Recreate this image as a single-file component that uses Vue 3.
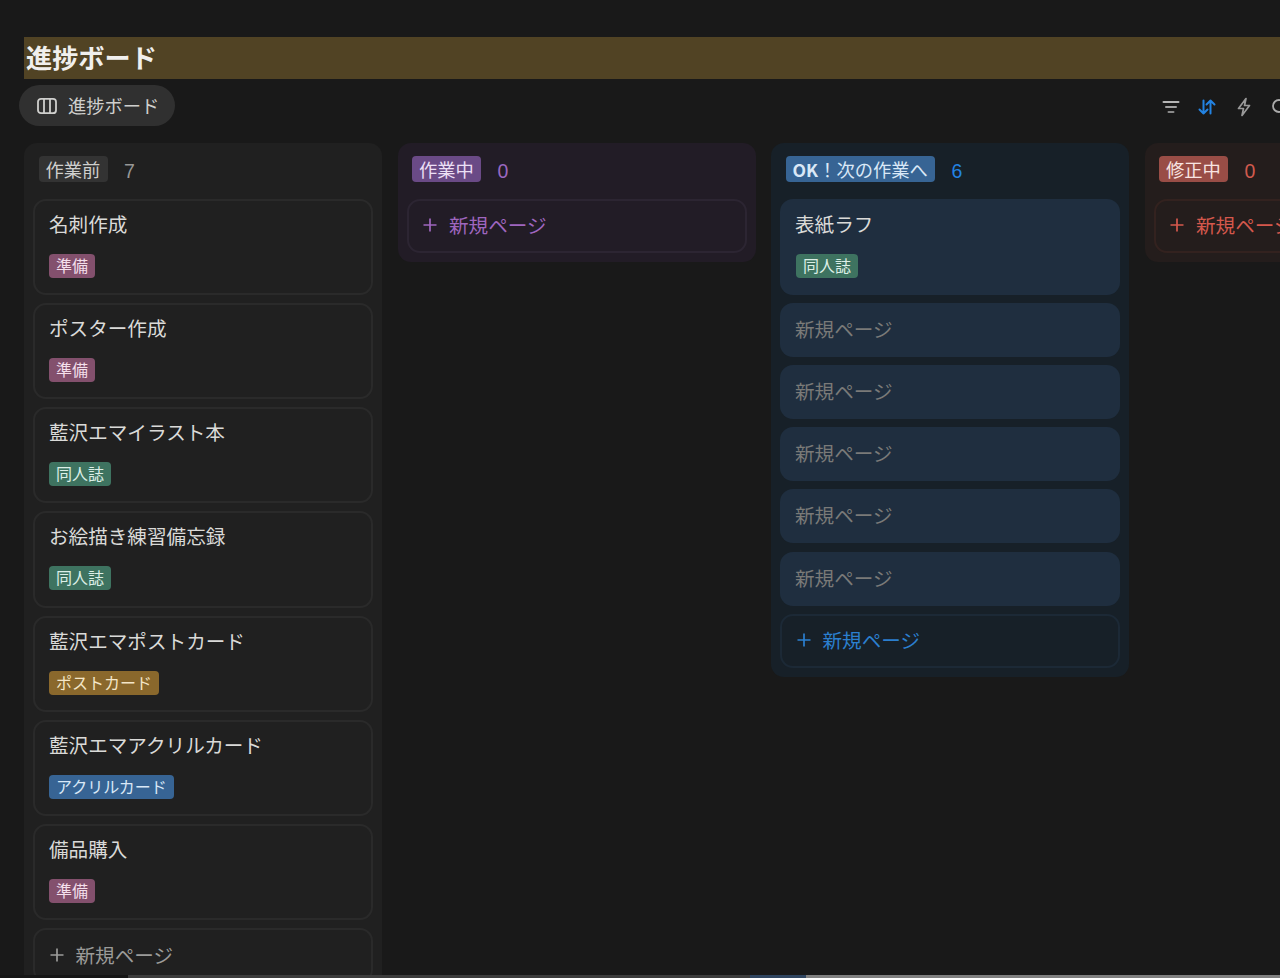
<script setup>
const columns = [
  {
    key: 'gray', label: '作業前', count: 7,
    cards: [
      { title: '名刺作成', tag: '準備', tagClass: 'pink' },
      { title: 'ポスター作成', tag: '準備', tagClass: 'pink' },
      { title: '藍沢エマイラスト本', tag: '同人誌', tagClass: 'green' },
      { title: 'お絵描き練習備忘録', tag: '同人誌', tagClass: 'green' },
      { title: '藍沢エマポストカード', tag: 'ポストカード', tagClass: 'brown' },
      { title: '藍沢エマアクリルカード', tag: 'アクリルカード', tagClass: 'blue' },
      { title: '備品購入', tag: '準備', tagClass: 'pink' }
    ]
  },
  { key: 'purple', label: '作業中', count: 0, cards: [] },
  {
    key: 'azure', strong: 'OK', label: '！次の作業へ', count: 6,
    cards: [
      { title: '表紙ラフ', tag: '同人誌', tagClass: 'green' },
      { title: '新規ページ', muted: true },
      { title: '新規ページ', muted: true },
      { title: '新規ページ', muted: true },
      { title: '新規ページ', muted: true },
      { title: '新規ページ', muted: true }
    ]
  },
  { key: 'red', label: '修正中', count: 0, cards: [] }
]
</script>

<template>
  <div class="page">
    <h1 class="title">進捗ボード</h1>
    <div class="toolbar">
      <div class="view-pill">
        <svg class="view-icon" viewBox="0 0 20 20" fill="none" stroke="currentColor" stroke-width="1.8">
          <rect x="1" y="2.8" width="18" height="14.4" rx="3" />
          <path d="M7 2.8v14.4M13 2.8v14.4" />
        </svg>
        <span class="pill-text">進捗ボード</span>
      </div>
      <div class="tools">
        <svg class="tool" viewBox="0 0 20 20" fill="none" stroke-width="2" stroke-linecap="round">
          <path stroke="#b5b5b5" d="M2.5 5h15" />
          <path stroke="#a0a0a0" d="M5 10h10" />
          <path stroke="#8a8a8a" d="M7.5 15h5" />
        </svg>
        <svg class="tool" viewBox="0 0 20 20" fill="none" stroke="#2383e2" stroke-width="2" stroke-linecap="round" stroke-linejoin="round">
          <path d="M6.5 3.5v13M2.5 12.5l4 4 4-4M13.5 16.5v-13M9.5 7.5l4-4 4 4" />
        </svg>
        <svg class="tool" viewBox="0 0 20 20" fill="none" stroke="#9a9a9a" stroke-width="1.7" stroke-linejoin="round">
          <path d="M12 1.5 4.5 11.5h5L8 18.5l7.5-10h-5z" />
        </svg>
        <svg class="tool" viewBox="0 0 20 20" fill="none" stroke="#aaa" stroke-width="1.8" stroke-linecap="round">
          <circle cx="9" cy="9" r="6" />
          <path d="m13.5 13.5 4 4" />
        </svg>
      </div>
    </div>
    <div class="board">
      <section v-for="col in columns" :key="col.key" class="column" :class="col.key">
        <header class="col-head">
          <span class="col-label"><b v-if="col.strong" class="strong">{{ col.strong }}</b>{{ col.label }}</span>
          <span class="col-count">{{ col.count }}</span>
        </header>
        <div class="cards">
          <article v-for="(card, i) in col.cards" :key="i" class="card" :class="{ short: card.muted }">
            <div class="card-title" :class="{ muted: card.muted }">{{ card.title }}</div>
            <span v-if="card.tag" class="tag" :class="card.tagClass">{{ card.tag }}</span>
          </article>
          <div class="add">
            <svg class="plus" viewBox="0 0 14 14" fill="none" stroke="currentColor" stroke-width="1.7">
              <path d="M7 .5v13M.5 7h13" />
            </svg>
            <span>新規ページ</span>
          </div>
        </div>
      </section>
    </div>
    <div class="scrollbar">
      <div class="sb-start"></div>
      <div class="sb-track"></div>
      <div class="sb-mid"></div>
      <div class="sb-thumb"></div>
    </div>
  </div>
</template>

<style>
html, body { margin: 0; background: #191919; }
</style>

<style scoped>
.page {
  position: relative;
  box-sizing: border-box;
  width: 1280px;
  height: 978px;
  overflow: hidden;
  padding-top: 37px;
  background: #191919;
  color: #d4d4d4;
  font-family: "Noto Sans CJK JP", "Liberation Sans", sans-serif;
}
.title {
  margin: 0 0 6.5px 24px;
  height: 41.5px;
  padding-left: 2px;
  background: #514324;
  color: #f0efed;
  font-size: 26.2px;
  font-weight: 700;
  line-height: 40px;
}
.toolbar {
  display: flex;
  align-items: center;
  justify-content: space-between;
  height: 41px;
  padding-left: 19px;
}
.view-pill {
  display: flex;
  align-items: center;
  gap: 11px;
  box-sizing: border-box;
  width: 156px;
  height: 41px;
  padding-left: 18px;
  border-radius: 21px;
  background: #303030;
  color: #cfcfcd;
  font-size: 18.3px;
}
.pill-text { padding-bottom: 2px; }
.view-icon { width: 20px; height: 20px; }
.tools {
  display: flex;
  gap: 16.3px;
  width: 119px;
  flex: none;
  padding-top: 2px;
}
.tool { width: 20px; height: 20px; flex: none; }
.board {
  display: flex;
  align-items: flex-start;
  gap: 15.5px;
  margin-top: 17px;
  padding-left: 24px;
  width: 1700px;
}
.column {
  box-sizing: border-box;
  flex: none;
  width: 358px;
  padding: 13px 9px 9.5px;
  border-radius: 13px;
}
.col-head {
  display: flex;
  align-items: center;
  gap: 15px;
  height: 26px;
  padding-left: 5.5px;
  margin-bottom: 16.5px;
  font-size: 18.3px;
}
.col-label {
  padding: 0 7.6px 0 7px;
  height: 26px;
  line-height: 26px;
  border-radius: 4px;
  white-space: nowrap;
}
.strong { font-size: 17.6px; font-weight: 700; }
.col-count {
  padding-top: 3px;
  padding-left: 1px;
  font-size: 19.5px;
  line-height: 26px;
  font-family: "Liberation Sans", sans-serif;
}
.cards { display: flex; flex-direction: column; gap: 8.1px; }
.card {
  box-sizing: border-box;
  height: 96.2px;
  padding: 9px 15px 0;
  border-radius: 13px;
}
.card.short { height: 54.1px; padding-top: 10px; }
.card-title {
  height: 32px;
  line-height: 32px;
  font-size: 19.6px;
  color: #dadad8;
  white-space: nowrap;
}
.card-title.muted { color: #7a7a78; }
.tag {
  display: inline-block;
  margin-top: 14px;
  height: 24px;
  padding: 0 7px;
  line-height: 23px;
  border-radius: 4px;
  font-size: 16px;
  white-space: nowrap;
}
.azure .tag { margin-left: 1px; }
.pink { background: #83506d; color: #f4dfeb; }
.green { background: #3e7360; color: #dcefe7; }
.brown { background: #8a682c; color: #f4e6c8; }
.blue { background: #376494; color: #d9e8f7; }
.add {
  display: flex;
  align-items: center;
  gap: 12px;
  box-sizing: border-box;
  height: 54.1px;
  padding: 0 0 2px 14.5px;
  border-radius: 13px;
  font-size: 19.6px;
  white-space: nowrap;
}
.plus { width: 14px; height: 14px; flex: none; }

.column.gray { background: #202020; }
.gray .col-label { background: #333333; color: #cfcfcd; }
.gray .col-count { color: #979796; }
.gray .card { background: #202020; border: 2px solid #2a2a2a; padding: 7px 14px 0; }
.gray .add { border: 2px solid #2a2a2a; color: #9b9b99; }

.column.purple { background: #221c26; }
.purple .col-label { background: #6a4a86; color: #ecdff5; }
.purple .col-count { color: #9a68c0; }
.purple .add { border: 2px solid #2c2532; color: #9f66bf; }

.column.azure { background: #172028; }
.azure .col-label { background: #376494; color: #d9e8f7; }
.azure .col-count { color: #2383e2; }
.azure .card { background: #1f2e3f; }
.azure .add { border: 2px solid #1c2936; color: #2b7fcf; }

.column.red { background: #241d1c; }
.red .col-label { background: #994d46; color: #f8e4e1; }
.red .col-count { color: #d05a4e; }
.red .add { border: 2px solid #33221f; color: #d5584c; }

.scrollbar {
  position: absolute;
  left: 0;
  right: 0;
  bottom: 0;
  height: 3px;
  display: flex;
}
.sb-start { width: 128px; background: #161616; }
.sb-track { width: 622px; background: #3c3c3c; }
.sb-mid { width: 56px; background: #2f4560; }
.sb-thumb { flex: 1; background: #808080; }
</style>
